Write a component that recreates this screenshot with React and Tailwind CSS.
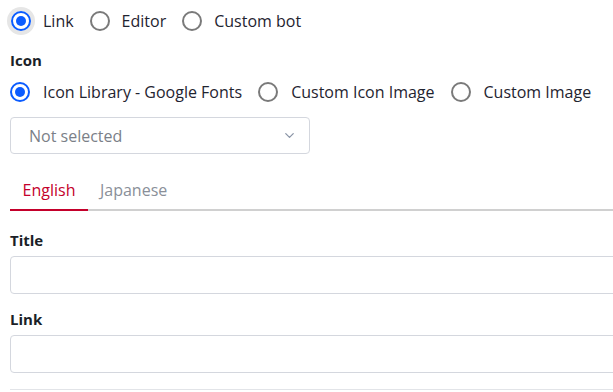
import { ChevronDown } from 'lucide-react';

const Radio = ({ checked, halo }) => (
  <span
    className={`flex h-5 w-5 shrink-0 items-center justify-center rounded-full border-2 ${
      checked ? 'border-[#0b5cff]' : 'border-[#7a7a7a]'
    } ${halo ? 'ring-4 ring-[#e6e6e6]' : ''}`}
  >
    {checked && <span className="h-[10px] w-[10px] rounded-full bg-[#0b5cff]" />}
  </span>
);

const Option = ({ label, checked, halo, tight }) => (
  <label className={`mr-4 flex items-center ${tight ? 'gap-3' : 'gap-[13px]'}`}>
    <Radio checked={checked} halo={halo} />
    <span className="text-[16px] leading-[22px] text-[#1f2430]">{label}</span>
  </label>
);

export default function App() {
  return (
    <div
      className="h-[392px] w-[613px] overflow-hidden bg-white"
      style={{ fontFamily: '"Open Sans", "Noto Sans", sans-serif' }}
    >
      {/* Type */}
      <div className="flex h-[42px] items-center pl-[11px]">
        <Option label="Link" checked halo tight />
        <Option label="Editor" tight />
        <Option label="Custom bot" tight />
      </div>

      {/* Icon */}
      <div className="pl-[10px]">
        <p className="mt-[7px] text-[15px] font-bold leading-[22px] text-[#1b1f28]">Icon</p>
        <div className="mt-[10px] flex h-[22px] items-center">
          <Option label="Icon Library - Google Fonts" checked />
          <Option label="Custom Icon Image" />
          <Option label="Custom Image" />
        </div>
        <div className="mt-[14px] flex h-[37px] w-[300px] items-center justify-between rounded border border-[#d4d7de] pl-[18px] pr-[12px]">
          <span className="text-[16px] leading-[22px] text-[#7b7f88]">Not selected</span>
          <ChevronDown className="h-[15px] w-[15px] text-[#8a94a6]" strokeWidth={2} />
        </div>
      </div>

      {/* Tabs */}
      <div className="ml-[10px] mt-[25px] flex border-b-2 border-[#d0d0d0]">
        <div className="-mb-[2px] w-[78px] border-b-2 border-[#c4002b] pb-[8px] text-center text-[16px] leading-[22px] text-[#c4002b]">
          English
        </div>
        <div className="pb-[8px] pl-[12px] text-[16px] leading-[22px] text-[#8a8f99]">Japanese</div>
      </div>

      {/* Fields */}
      <div className="pl-[10px]">
        <p className="mt-[18px] text-[15px] font-bold leading-[22px] text-[#1b1f28]">Title</p>
        <div className="mt-[5px] h-[38px] w-[620px] rounded border border-[#d4d7de]" />
        <p className="mt-[14px] text-[15px] font-bold leading-[22px] text-[#1b1f28]">Link</p>
        <div className="mt-[5px] h-[38px] w-[620px] rounded border border-[#d4d7de]" />
        <div className="mt-[16px] w-[620px] border-t border-[#e2e4e8]" />
      </div>
    </div>
  );
}
